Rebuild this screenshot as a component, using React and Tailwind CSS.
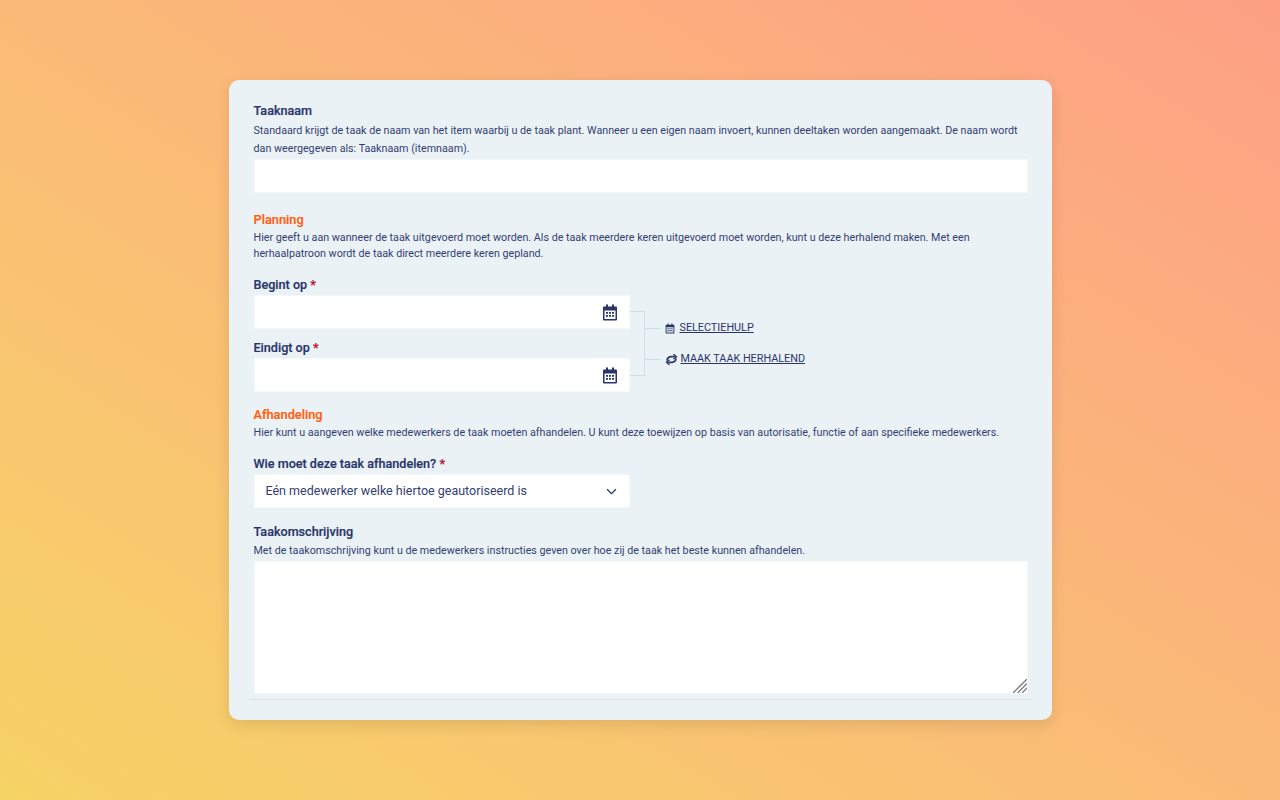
import React from 'react';

const CalendarIcon = ({ className }) => (
  <svg viewBox="0 0 16 16" className={className} fill="currentColor">
    <path
      fillRule="evenodd"
      d="M4 0h2v2h4V0h2v2h2a1 1 0 0 1 1 1v12a1 1 0 0 1-1 1H2a1 1 0 0 1-1-1V3a1 1 0 0 1 1-1h2V0ZM2.500 6v8.500h11V6h-11Z"
    />
    <path d="M4 7.500h2v1.700H4zM7 7.500h2v1.700H7zM10 7.500h2v1.700h-2zM4 10.500h2v1.700H4zM7 10.500h2v1.700H7zM10 10.500h2v1.700h-2z" />
  </svg>
);

const RepeatIcon = ({ className }) => (
  <svg viewBox="0 0 16 16" className={className} fill="none" stroke="currentColor" strokeWidth="2">
    <path d="M2.500 9.500A5.500 4.500 0 0 1 7 4.500h5" />
    <path d="M13.500 6.500A5.500 4.500 0 0 1 9 11.500H4" />
    <path d="M10.500 1.500 14 4.700l-3.500 3" strokeWidth="1.800" />
    <path d="M5.500 8.300 2 11.300l3.500 3.200" strokeWidth="1.800" />
  </svg>
);

const Required = () => <span className="text-[#ff0018]">*</span>;

const Label = ({ children }) => (
  <label className="block h-[16px] text-[12.6px] leading-[16px] font-medium text-[#29356b] [-webkit-text-stroke:0.2px_#29356b]">
    {children}
  </label>
);

const Heading = ({ children }) => (
  <h3 className="h-[16px] text-[12.8px] leading-[16px] font-medium text-[#ff6010] [-webkit-text-stroke:0.2px_#ff6010]">{children}</h3>
);

const Desc = ({ className, children }) => (
  <p className={`text-[10.72px] text-[#323e72] ${className}`}>{children}</p>
);

const DateField = ({ label }) => (
  <div>
    <Label>
      {label} <Required />
    </Label>
    <div className="relative mt-[2px]">
      <input className="block h-[34px] w-full bg-white border border-[#f5f8fa] outline-none" />
      <CalendarIcon className="absolute right-[12px] top-[9px] h-[17px] w-[16px] text-[#29356b]" />
    </div>
  </div>
);

export default function App() {
  return (
    <div className="flex h-[800px] w-[1280px] items-center justify-center bg-linear-to-tr from-[#f6d365] to-[#fda085] font-['Roboto',sans-serif]">
      <div className="h-[640px] w-[823px] overflow-hidden rounded-[10px] bg-[#ebf2f6] pl-[25px] pr-[24px] pt-[23px] shadow-[0_5px_15px_rgba(0,0,0,0.1)]">
        <Label>Taaknaam</Label>
        <Desc className="mt-[3px] leading-[18px]">
          Standaard krijgt de taak de naam van het item waarbij u de taak plant. Wanneer u een eigen naam invoert, kunnen deeltaken worden aangemaakt. De naam wordt dan weergegeven als: Taaknaam (itemnaam).
        </Desc>
        <input className="mt-[1px] block h-[34px] w-full bg-white border border-[#f5f8fa] outline-none" />

        <div className="mt-[19px]">
          <Heading>Planning</Heading>
        </div>
        <Desc className="mt-[2px] leading-[16px]">
          Hier geeft u aan wanneer de taak uitgevoerd moet worden. Als de taak meerdere keren uitgevoerd moet worden, kunt u deze herhalend maken. Met een herhaalpatroon wordt de taak direct meerdere keren gepland.
        </Desc>

        <div className="mt-[15px] flex">
          <div className="flex w-[376px] flex-col gap-[11px]">
            <DateField label="Begint op" />
            <DateField label="Eindigt op" />
          </div>
          <div className="mt-[34px] h-[65px] w-[15px] border-y border-r border-[#cfdde6]" />
          <div className="mt-[34px] flex h-[65px] flex-col text-[10.8px] text-[#29356b]">
            <div className="mt-[9px] flex h-[16px] items-center">
              <span className="h-px w-[15px] bg-[#cfdde6]" />
              <a href="#" className="ml-[5px] flex items-center gap-[5px]">
                <CalendarIcon className="h-[11px] w-[10px]" />
                <span className="underline">SELECTIEHULP</span>
              </a>
            </div>
            <div className="mt-[15px] flex h-[16px] items-center">
              <span className="h-px w-[15px] bg-[#cfdde6]" />
              <a href="#" className="ml-[5px] flex items-center gap-[3px]">
                <RepeatIcon className="h-[13px] w-[13px]" />
                <span className="underline">MAAK TAAK HERHALEND</span>
              </a>
            </div>
          </div>
        </div>

        <div className="mt-[15px]">
          <Heading>Afhandeling</Heading>
        </div>
        <Desc className="mt-[2px] leading-[16px]">
          Hier kunt u aangeven welke medewerkers de taak moeten afhandelen. U kunt deze toewijzen op basis van autorisatie, functie of aan specifieke medewerkers.
        </Desc>

        <div className="mt-[15px]">
          <Label>
            Wie moet deze taak afhandelen? <Required />
          </Label>
        </div>
        <div className="mt-[2px] flex h-[34px] w-[376px] items-center justify-between border border-[#f5f8fa] bg-white pl-[11px] pr-[12px] text-[12.5px] text-[#323e72]">
          <span>Eén medewerker welke hiertoe geautoriseerd is</span>
          <svg viewBox="0 0 12 8" className="h-[7px] w-[11px]" fill="none" stroke="#29356b" strokeWidth="1.500">
            <path d="M1 1.500 6 6.500l5-5" />
          </svg>
        </div>

        <div className="mt-[16px]">
          <Label>Taakomschrijving</Label>
        </div>
        <Desc className="mt-[3px] leading-[16px]">
          Met de taakomschrijving kunt u de medewerkers instructies geven over hoe zij de taak het beste kunnen afhandelen.
        </Desc>
        <div className="relative mt-[2px]">
          <textarea className="block h-[133px] w-full resize-none bg-white border border-[#f5f8fa] outline-none" />
          <svg viewBox="0 0 14 14" className="absolute bottom-[1px] right-[1px] h-[14px] w-[14px]" stroke="#808080" strokeWidth="1.400">
            <path d="M0 14 14 0M4.500 14 14 4.500M9 14l5-5" />
          </svg>
        </div>
        <hr className="-ml-[5px] -mr-[4px] mt-[5px] border-t border-[#dde3e9]" />
      </div>
    </div>
  );
}
